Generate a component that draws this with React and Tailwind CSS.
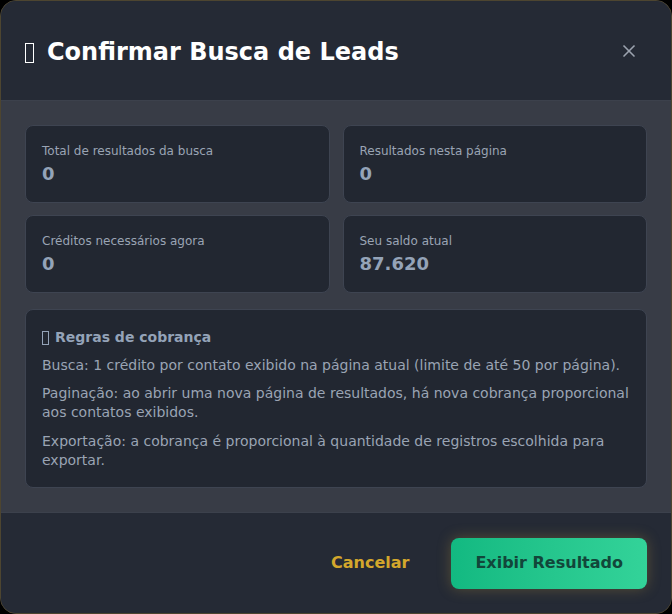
import React from 'react';
import { X } from "lucide-react";

const font = { fontFamily: '"DejaVu Sans", sans-serif' };

// missing-glyph box, as the emoji shows without an emoji font
const Tofu = ({ className }) => (
  <span className={`inline-block border border-current align-middle ${className}`} />
);

const StatCard = ({ label, value }) => (
  <div className="bg-[#222731] border border-[#3e4451] rounded-lg px-4 pt-[17px] pb-[16px]">
    <div className="text-xs text-[#9aa4b4] leading-4">{label}</div>
    <div className="text-lg font-bold text-[#94a3b8] leading-6 mt-[3px]">{value}</div>
  </div>
);

const App = () => {
  return (
    <div className="w-[672px] h-[614px] bg-black" style={font}>
      <div className="h-full flex flex-col rounded-2xl border border-[#4d4530] overflow-hidden bg-[#383c46]">
        {/* Header */}
        <header className="h-[100px] shrink-0 bg-[#252a35] border-b border-[#3c414c] flex items-center justify-between pl-6 pr-8">
          <h2 className="text-2xl font-bold text-white pt-[2px] flex items-center">
            <Tofu className="w-[9px] h-[20px] border-[1.5px] mr-[13px] mt-[3px]" />
            Confirmar Busca de Leads
          </h2>
          <button className="text-[#9ca3af]">
            <X className="h-5 w-5" strokeWidth={2} />
          </button>
        </header>

        {/* Body */}
        <main className="flex-1 px-6 pt-6 flex flex-col gap-4">
          <div className="grid grid-cols-2 gap-x-[13px] gap-y-3">
            <StatCard label="Total de resultados da busca" value="0" />
            <StatCard label="Resultados nesta página" value="0" />
            <StatCard label="Créditos necessários agora" value="0" />
            <StatCard label="Seu saldo atual" value="87.620" />
          </div>

          <div className="bg-[#222731] border border-[#3e4451] rounded-lg px-4 pt-[18px] pb-[17px] text-sm text-[#9aa4b4] leading-[19px]">
            <div className="font-bold text-[#94a3b8] mb-[9px] flex items-center">
              <Tofu className="w-[7px] h-[14px] mr-[6px]" />
              Regras de cobrança
            </div>
            <p className="mb-[9px]">Busca: 1 crédito por contato exibido na página atual (limite de até 50 por página).</p>
            <p className="mb-[10px]">Paginação: ao abrir uma nova página de resultados, há nova cobrança proporcional aos contatos exibidos.</p>
            <p>Exportação: a cobrança é proporcional à quantidade de registros escolhida para exportar.</p>
          </div>
        </main>

        {/* Footer */}
        <footer className="h-[101px] shrink-0 bg-[#252a35] border-t border-[#3c414c] flex items-center justify-end gap-[18px] px-6">
          <button className="px-6 py-3 text-base font-bold text-[#d4a72c]">Cancelar</button>
          <button className="px-6 h-[51px] rounded-lg bg-gradient-to-r from-[#12b981] to-[#33d399] text-base font-bold text-[#12463a] shadow-[0_0_14px_rgba(180,150,60,0.35)]">
            Exibir Resultado
          </button>
        </footer>
      </div>
    </div>
  );
};

export default App;
